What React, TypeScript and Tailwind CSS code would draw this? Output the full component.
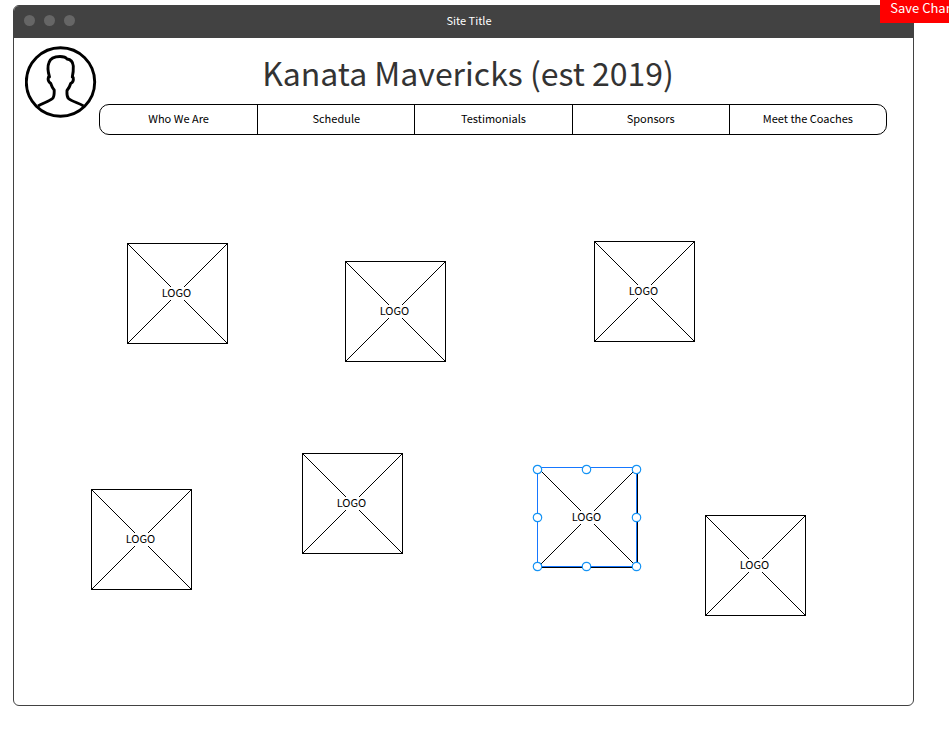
import React from "react";

const navItems = ["Who We Are", "Schedule", "Testimonials", "Sponsors", "Meet the Coaches"];

const logos = [
  { id: 1, x: 113, y: 108, selected: false },
  { id: 2, x: 331, y: 126, selected: false },
  { id: 3, x: 580, y: 106, selected: false },
  { id: 4, x: 77, y: 354, selected: false },
  { id: 5, x: 288, y: 318, selected: false },
  { id: 6, x: 523, y: 332, selected: true },
  { id: 7, x: 691, y: 380, selected: false },
];

const handles = [
  [0.5, 2.5],
  [49.5, 2.5],
  [99.5, 2.5],
  [0.5, 50.5],
  [99.5, 50.5],
  [0.5, 99.5],
  [49.5, 99.5],
  [99.5, 99.5],
];

function Avatar() {
  return (
    <svg
      className="size-[72px] shrink-0"
      viewBox="0 0 72 72"
      fill="none"
      stroke="#000"
      strokeWidth="2.9"
      strokeLinejoin="round"
      role="img"
      aria-label="Team profile"
    >
      <circle cx="35.5" cy="36" r="34.2" />
      <path d="M13 60 C18 57 24 55.500 27.500 52.500 C29.600 50.500 29.200 47 29.200 44 C27 41.500 26.500 39.500 25.800 37.500 C23 35.500 22.800 33 23.500 31 L24.500 31 C23 26 22.500 20 24 16.500 C25.500 12 30 10.500 35 10.500 C39 10.500 41 11.500 42 13 C46.500 13.500 48 16.500 48.300 20 C48.500 24 48 28 47.300 31 L48.200 31.500 C48.700 34 47.500 36.500 45.700 37.500 C45 40 44 42 42 44.500 C42 47 41.300 50 43.500 52.500 C47 55.500 54 57 58.500 60" />
    </svg>
  );
}

function Logo({ x, y, selected }: { x: number; y: number; selected: boolean }) {
  return (
    <div
      className="absolute flex size-[101px] items-center justify-center"
      style={{ left: x, top: y }}
    >
      <svg
        className="absolute inset-0 size-full overflow-visible"
        viewBox="0 0 101 101"
        fill="none"
        stroke="#000"
        aria-hidden="true"
      >
        <rect x="0.5" y="0.5" width="100" height="100" />
        <path d="M0.500 0.500 L100.500 100.500 M100.500 0.500 L0.500 100.500" />
      </svg>
      <span className="relative bg-white pr-0.5 pb-0.5 text-[11px] leading-[11px]">LOGO</span>
      {selected && (
        <svg
          className="absolute inset-0 size-full overflow-visible"
          viewBox="0 0 101 101"
          fill="none"
          aria-hidden="true"
        >
          <rect x="0.5" y="0.5" width="99" height="99" stroke="#1677ff" />
          {handles.map(([cx, cy]) => (
            <circle key={`${cx}-${cy}`} cx={cx} cy={cy} r="4.200" fill="#fff" stroke="#1493f5" strokeWidth="1.200" />
          ))}
        </svg>
      )}
    </div>
  );
}

export default function App() {
  return (
    <div className="relative min-h-screen overflow-hidden bg-white pt-[5px] pr-[35px] pl-[13px] font-['Noto_Sans_CJK_SC',sans-serif] text-black">
      <div className="overflow-hidden rounded-md border border-[#424242]">
        <header className="flex h-8 items-center bg-[#424242] pr-[50px] pb-1 pl-2.5">
          <div className="flex gap-[9px]" aria-hidden="true">
            <span className="size-[11px] rounded-full bg-[#666]" />
            <span className="size-[11px] rounded-full bg-[#666]" />
            <span className="size-[11px] rounded-full bg-[#666]" />
          </div>
          <p className="flex-1 text-center text-[11px] leading-4 text-white">Site Title</p>
        </header>

        <div className="flex gap-0.5 pt-2 pr-[26px] pl-[11px]">
          <Avatar />
          <div className="min-w-0 flex-1">
            <h1 className="pr-[50px] pb-1.5 text-center text-[32px] leading-[52px] whitespace-nowrap text-[#333]">
              Kanata Mavericks (est 2019)
            </h1>
            <nav className="grid grid-cols-5 rounded-[10px] border border-black">
              {navItems.map((item) => (
                <a
                  key={item}
                  href="#"
                  className="block border-l border-black pt-[5px] pb-2 text-center text-[11px] leading-4 first:border-l-0"
                >
                  {item}
                </a>
              ))}
            </nav>
          </div>
        </div>

        <main className="relative h-[570px]">
          {logos.map((logo) => (
            <Logo key={logo.id} x={logo.x} y={logo.y} selected={logo.selected} />
          ))}
        </main>
      </div>

      <button
        type="button"
        className="absolute -top-2 -right-[35px] h-[31px] bg-[#ff0000] px-2.5 text-[13px] whitespace-nowrap text-white"
      >
        Save Changes
      </button>
    </div>
  );
}
